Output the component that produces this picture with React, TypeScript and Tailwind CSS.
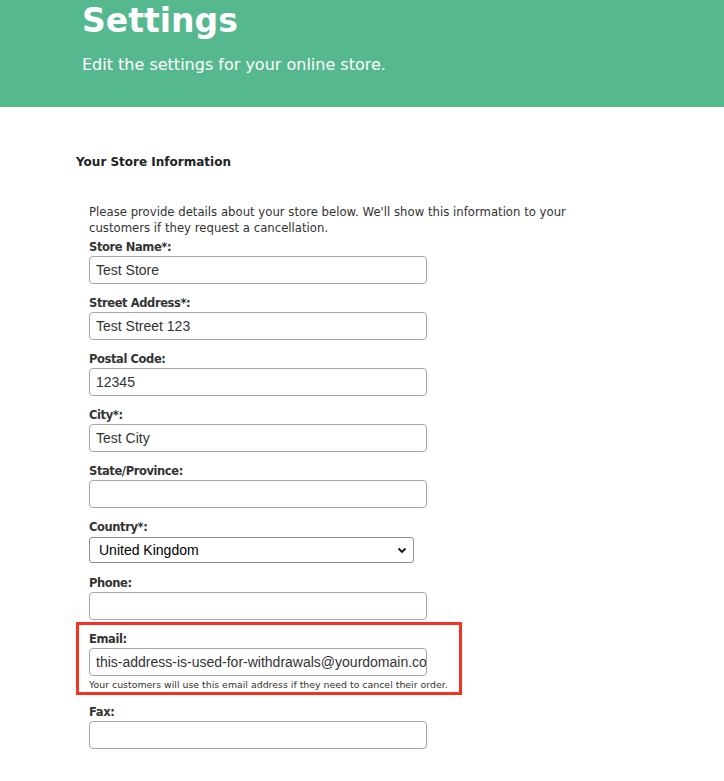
import type { ReactNode } from "react";

type Field = {
  label: string;
  value?: string;
};

const fieldsTop: Field[] = [
  { label: "Store Name*:", value: "Test Store" },
  { label: "Street Address*:", value: "Test Street 123" },
  { label: "Postal Code:", value: "12345" },
  { label: "City*:", value: "Test City" },
  { label: "State/Province:" },
];

function Label({ children }: { children: ReactNode }) {
  return (
    <div className="h-[17px] text-[11.5px] font-bold leading-[17px] tracking-[-0.4px] text-[#333]">{children}</div>
  );
}

function TextInput({ value }: { value?: string }) {
  return (
    <div className="flex h-[28px] w-[338px] items-center overflow-hidden whitespace-nowrap rounded-[4px] border border-[#a6a6a6] bg-white px-[6px] font-['Liberation_Sans',Arial,sans-serif] text-[14px] text-[#333]">
      {value}
    </div>
  );
}

function FieldRow({ label, value }: Field) {
  return (
    <div className="flex h-[56px] flex-col">
      <Label>{label}</Label>
      <TextInput value={value} />
    </div>
  );
}

export default function App() {
  return (
    <div className="min-h-[781px] bg-white font-['DejaVu_Sans',Verdana,sans-serif] text-[#333]">
      <header className="h-[107px] bg-[#56b88f] pl-[82px] pt-[1px] text-white">
        <h1 className="text-[33px] font-bold leading-[40px]">Settings</h1>
        <p className="mt-[14px] text-[16px] leading-[20px]">Edit the settings for your online store.</p>
      </header>

      <main className="pl-[76px] pt-[47px]">
        <h2 className="text-[12px] font-bold leading-[16px] text-[#222]">Your Store Information</h2>

        <div className="pl-[13px] pt-[34px]">
          <p className="w-[500px] text-[11.7px] leading-[16px] text-[#333]">
            Please provide details about your store below. We'll show this information to your customers if they request a cancellation.
          </p>

          <div className="mt-[3px] flex flex-col">
            {fieldsTop.map((f) => (
              <FieldRow key={f.label} label={f.label} value={f.value} />
            ))}

            <div className="flex h-[56px] flex-col">
              <Label>Country*:</Label>
              <div className="mt-[1px] flex h-[26px] w-[325px] items-center justify-between rounded-[3px] border border-[#8e8e8e] bg-white pl-[9px] pr-[6px] font-['Liberation_Sans',Arial,sans-serif] text-[14px] text-black">
                <span>United Kingdom</span>
                <svg width="10" height="7" viewBox="0 0 10 7" aria-hidden="true">
                  <path d="M1.5 1.5 L5 5 L8.5 1.5" fill="none" stroke="#111" strokeWidth="1.8" />
                </svg>
              </div>
            </div>

            <div className="flex flex-col">
              <Label>Phone:</Label>
              <TextInput />
            </div>
          </div>
        </div>

        <div className="mt-[2px] w-[386px] border-[3px] border-[#f4321f] pb-[1px] pl-[10px] pt-[6px]">
          <Label>Email:</Label>
          <TextInput value="this-address-is-used-for-withdrawals@yourdomain.com" />
          <p className="mt-[3px] text-[9.4px] leading-[12px] text-[#333]">
            Your customers will use this email address if they need to cancel their order.
          </p>
        </div>

        <div className="pl-[13px] pt-[9px]">
          <Label>Fax:</Label>
          <TextInput />
        </div>
      </main>
    </div>
  );
}
